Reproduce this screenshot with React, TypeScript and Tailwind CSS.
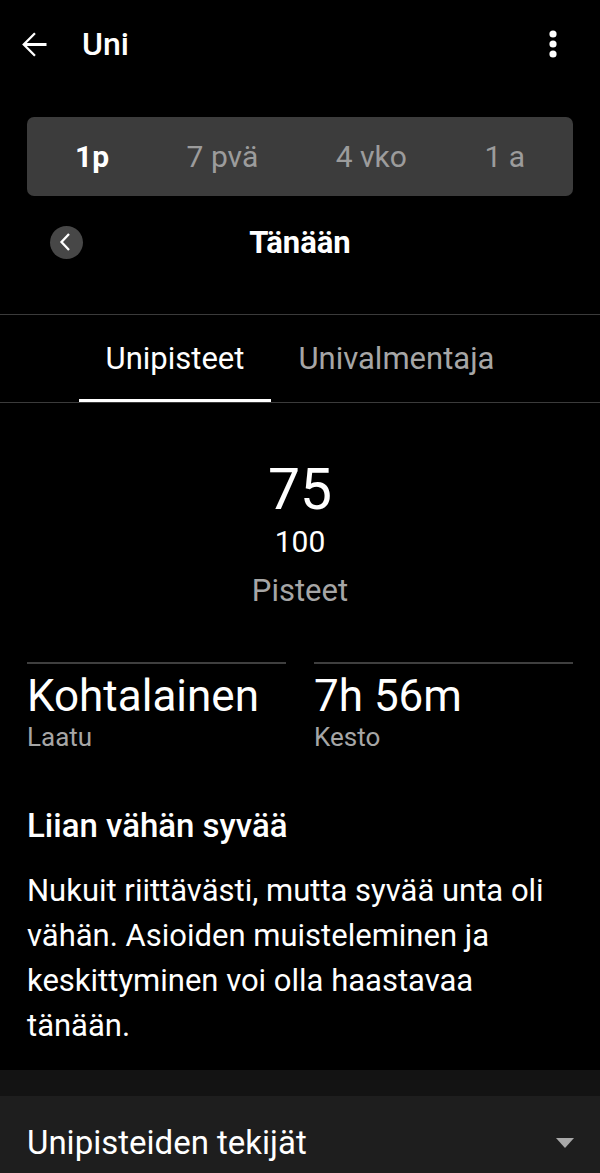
import { useState } from 'react';

const periods = ['1p', '7 pvä', '4 vko', '1 a'];

function BackArrow() {
  return (
    <svg width="39" height="39" viewBox="0 0 24 24" className="text-white">
      <path
        fill="currentColor"
        d="M20 11.1H7.9l5.5-5.5L12.4 4.6 5 12l7.4 7.4 1-1-5.5-5.5H20z"
      />
    </svg>
  );
}

function MoreDots() {
  return (
    <svg width="10" height="30" viewBox="0 0 10 30">
      <circle cx="5" cy="5" r="3.6" fill="white" />
      <circle cx="5" cy="15" r="3.6" fill="white" />
      <circle cx="5" cy="25" r="3.6" fill="white" />
    </svg>
  );
}

export default function App() {
  const [period, setPeriod] = useState('1p');
  const [tab, setTab] = useState(0);

  return (
    <div
      className="min-h-[1173px] w-[600px] bg-black text-white overflow-hidden"
      style={{ fontFamily: 'Roboto, "Noto Sans", sans-serif' }}
    >
      {/* header */}
      <div className="h-[88px] flex items-center pl-[14px] pr-[42px]">
        <BackArrow />
        <span className="ml-[29px] text-[32px] font-medium leading-none">Uni</span>
        <div className="ml-auto">
          <MoreDots />
        </div>
      </div>

      {/* period selector */}
      <div className="mx-[27px] mt-[29px] h-[79px] rounded-[7px] bg-[#3c3c3c] flex items-center justify-between px-[48px]">
        {periods.map((p) => (
          <button
            key={p}
            onClick={() => setPeriod(p)}
            className={
              p === period
                ? 'text-[30px] leading-none font-bold text-white'
                : 'text-[30px] leading-none text-[#9c9c9c]'
            }
          >
            {p}
          </button>
        ))}
      </div>

      {/* date row */}
      <div className="mt-[20px] h-[52px] relative flex items-center justify-center">
        <button className="absolute left-[50px] w-[33px] h-[33px] rounded-full bg-[#474747] flex items-center justify-center">
          <svg width="14" height="20" viewBox="0 0 14 20" className="mr-[3px]">
            <path d="M11 2 L3.5 10 L11 18" fill="none" stroke="white" strokeWidth="2.3" />
          </svg>
        </button>
        <span className="text-[31px] font-bold leading-none">Tänään</span>
      </div>

      {/* tabs */}
      <div className="mt-[46px] border-t border-b border-[#3b3b3b] flex justify-center">
        {['Unipisteet', 'Univalmentaja'].map((t, i) => (
          <button
            key={t}
            onClick={() => setTab(i)}
            className={
              i === tab
                ? 'h-[87px] px-[27px] pt-[3px] border-b-[3px] border-white text-white text-[31px] leading-none'
                : 'h-[87px] px-[27px] pt-[3px] border-b-[3px] border-transparent text-[#a6a6a6] text-[31px] leading-none'
            }
          >
            {t}
          </button>
        ))}
      </div>

      {/* score */}
      <div className="flex flex-col items-center pt-[58px]">
        <span className="text-[57px] leading-none">75</span>
        <span className="mt-[9px] text-[30px] leading-none">100</span>
        <span className="mt-[18px] text-[31px] leading-none text-[#a6a6a6]">Pisteet</span>
      </div>

      {/* stats */}
      <div className="mt-[56px] px-[27px] grid grid-cols-2 gap-[28px]">
        <div className="border-t-2 border-[#3f3f3f] pt-[10px]">
          <div className="text-[44px] leading-none">Kohtalainen</div>
          <div className="mt-[6px] text-[26px] leading-none text-[#a6a6a6]">Laatu</div>
        </div>
        <div className="border-t-2 border-[#3f3f3f] pt-[10px]">
          <div className="text-[44px] leading-none">7h 56m</div>
          <div className="mt-[6px] text-[26px] leading-none text-[#a6a6a6]">Kesto</div>
        </div>
      </div>

      {/* insight */}
      <div className="px-[27px] pt-[59px] pb-[22px]">
        <h2 className="text-[33px] font-medium leading-none">Liian vähän syvää</h2>
        <p className="mt-[26px] text-[31px] leading-[45px]">
          Nukuit riittävästi, mutta syvää unta oli vähän. Asioiden muisteleminen ja
          keskittyminen voi olla haastavaa tänään.
        </p>
      </div>

      <div className="h-[26px] bg-[#131313]" />

      {/* factors */}
      <div className="bg-[#1e1e1e] h-[120px] px-[27px] pt-[30px] flex items-start">
        <span className="text-[33px] leading-none">Unipisteiden tekijät</span>
        <svg className="ml-auto mt-[12px] mr-[-1px]" width="18" height="11" viewBox="0 0 18 11">
          <path d="M0 0 H18 L9 10 Z" fill="#a9a9a9" />
        </svg>
      </div>
    </div>
  );
}
